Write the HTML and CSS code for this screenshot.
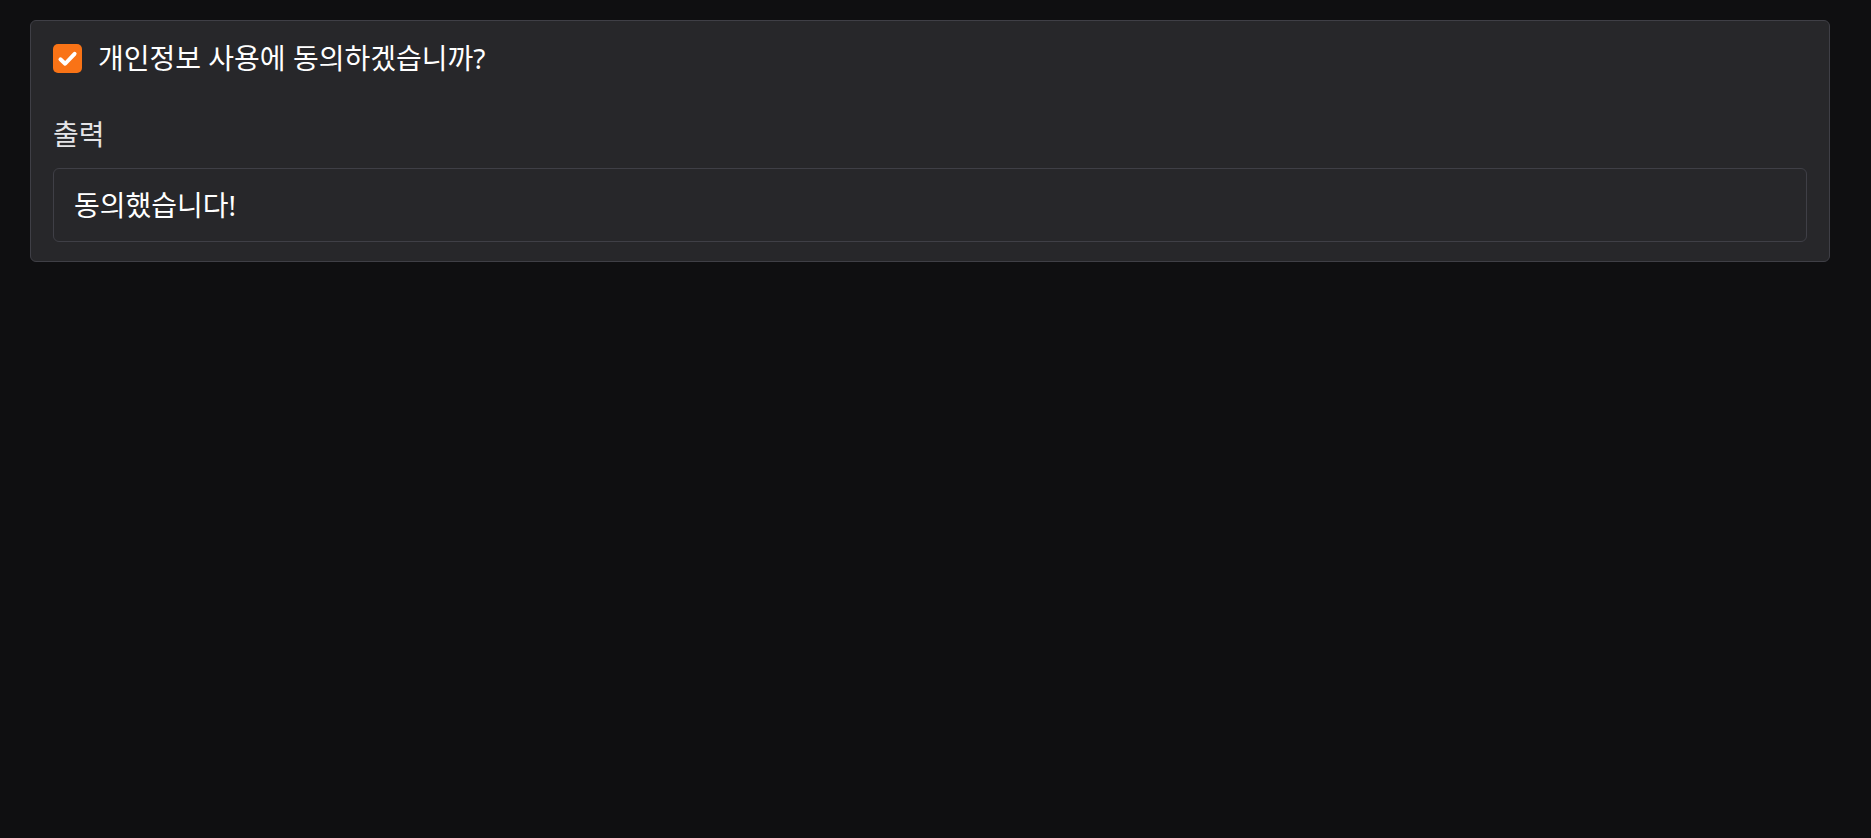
FILE: index.html
```html
<!DOCTYPE html>
<html lang="ko">
<head>
  <meta charset="UTF-8">
  <meta name="viewport" content="width=device-width, initial-scale=1.0">
  <title>개인정보 동의</title>
  <link rel="stylesheet" href="styles.css">
</head>
<body>
  <div class="card">
    <label class="check-row">
      <span class="checkbox">
        <svg viewBox="0 0 16 16" width="21" height="21">
          <path d="M2.6 8.6 L6.2 12 L13.4 4.4" fill="none" stroke="#fff" stroke-width="3" stroke-linecap="round" stroke-linejoin="round"/>
        </svg>
      </span>
      <span class="check-text">개인정보 사용에 동의하겠습니까?</span>
    </label>

    <div class="out-label">출력</div>
    <div class="output">동의했습니다!</div>
  </div>
</body>
</html>
```

FILE: styles.css
```css
body {
  margin: 0;
  padding: 20px 41px 0 30px;
  background: #0f0f11;
  font-family: "Noto Sans", "Noto Sans CJK KR", sans-serif;
  color: #fff;
  min-height: 100vh;
  box-sizing: border-box;
}

.card {
  background: #27272a;
  border: 1px solid #3f3f46;
  border-radius: 6px;
  padding: 23px 22px 19px;
}

.check-row {
  display: flex;
  align-items: center;
  gap: 16px;
  height: 29px;
}

.checkbox {
  width: 29px;
  height: 29px;
  border-radius: 5px;
  background: #f97316;
  display: flex;
  align-items: center;
  justify-content: center;
  flex-shrink: 0;
}

.check-text {
  font-size: 28px;
  line-height: 29px;
}

.out-label {
  margin-top: 46px;
  margin-bottom: 19px;
  font-size: 28px;
  line-height: 30px;
  color: #e4e4e7;
}

.output {
  border: 1px solid #3f3f46;
  border-radius: 6px;
  padding: 21px 20px;
  font-size: 28px;
  line-height: 30px;
}
```
